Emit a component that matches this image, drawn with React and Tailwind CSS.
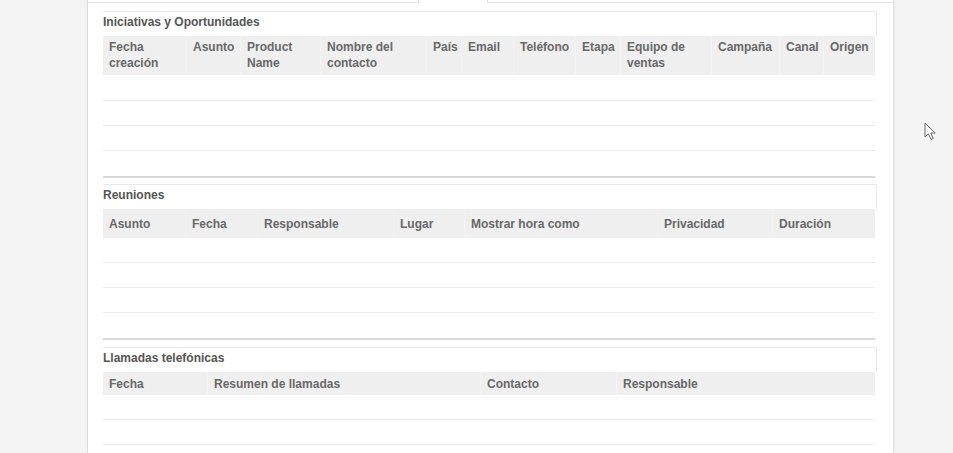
/**
 * Related lists panel — Iniciativas, Reuniones y Llamadas, all empty.
 */
const sections = [
  {
    title: "Iniciativas y Oportunidades",
    grid: "grid-cols-[84px_54px_80px_106px_35px_52px_62px_45px_91px_68px_44px_51px]",
    headH: "h-[39px] items-start pt-[3px]",
    rows: [26, 25, 25, 27],
    cols: [
      "Fecha creación",
      "Asunto",
      "Product Name",
      "Nombre del contacto",
      "País",
      "Email",
      "Teléfono",
      "Etapa",
      "Equipo de ventas",
      "Campaña",
      "Canal",
      "Origen",
    ],
    gapAfter: "mb-[6px]",
  },
  {
    title: "Reuniones",
    grid: "grid-cols-[83px_72px_136px_71px_193px_115px_102px]",
    headH: "h-[29px] items-center",
    rows: [25, 25, 25, 27],
    cols: ["Asunto", "Fecha", "Responsable", "Lugar", "Mostrar hora como", "Privacidad", "Duración"],
    gapAfter: "mb-[7px]",
  },
  {
    title: "Llamadas telefónicas",
    grid: "grid-cols-[105px_273px_136px_258px]",
    headH: "h-[23px] items-center",
    rows: [25, 25, 25],
    cols: ["Fecha", "Resumen de llamadas", "Contacto", "Responsable"],
    gapAfter: "",
  },
];

const rowHeight = { 25: "h-[25px]", 26: "h-[26px]", 27: "h-[27px]" };

function RelatedList({ section }) {
  return (
    <div className={`w-[774px] ${section.gapAfter}`}>
      {/* Title strip */}
      <div className="h-[25px] border-t border-r border-[#e8e8e8] pt-[2px] text-[12px] leading-[16px] font-bold text-[#555]">
        {section.title}
      </div>

      {/* Column headers */}
      <div className={`w-[772px] grid ${section.grid} bg-[#efefef]`}>
        {section.cols.map((c, i) => (
          <div
            key={i}
            className={`flex ${section.headH} px-[6px] text-[12px] leading-[16px] font-bold text-[#686868] border-r border-[#f3f3f3] last:border-r-0`}
          >
            {c}
          </div>
        ))}
      </div>

      {/* Empty rows */}
      {section.rows.map((h, i) => {
        const last = i === 3;
        return (
          <div
            key={i}
            className={`w-[772px] ${rowHeight[h]} ${
              last ? "border-b-2 border-[#d9d9d9]" : "border-b border-[#ececec]"
            }`}
          />
        );
      })}
    </div>
  );
}

export default function App() {
  return (
    <div className="relative h-screen overflow-hidden bg-[#f4f4f4] font-['Liberation_Sans',Arial,sans-serif]">
      <div className="ml-[87px] w-[807px] h-full bg-white border-x border-[#dedede] shadow-[0_0_3px_rgba(0,0,0,0.06)]">
        {/* Tab strip (active tab leaves a gap) */}
        <div className="flex h-[3px]">
          <div className="w-[331px] border-r border-b border-[#e2e2e2]" />
          <div className="w-[68px]" />
          <div className="flex-1 border-l border-b border-[#e2e2e2]" />
        </div>

        <div className="pl-[15px] pt-[8px]">
          {sections.map((s) => (
            <RelatedList key={s.title} section={s} />
          ))}
        </div>
      </div>

      {/* Mouse pointer */}
      <svg
        className="absolute left-[924px] top-[122px]"
        width="13"
        height="19"
        viewBox="0 0 13 19"
      >
        <path
          d="M1 1 L1 15 L4.5 11.8 L7 17.5 L9.2 16.5 L6.8 11 L11.2 11 Z"
          fill="#fff"
          stroke="#666"
          strokeWidth="1"
          strokeLinejoin="round"
        />
      </svg>
    </div>
  );
}
